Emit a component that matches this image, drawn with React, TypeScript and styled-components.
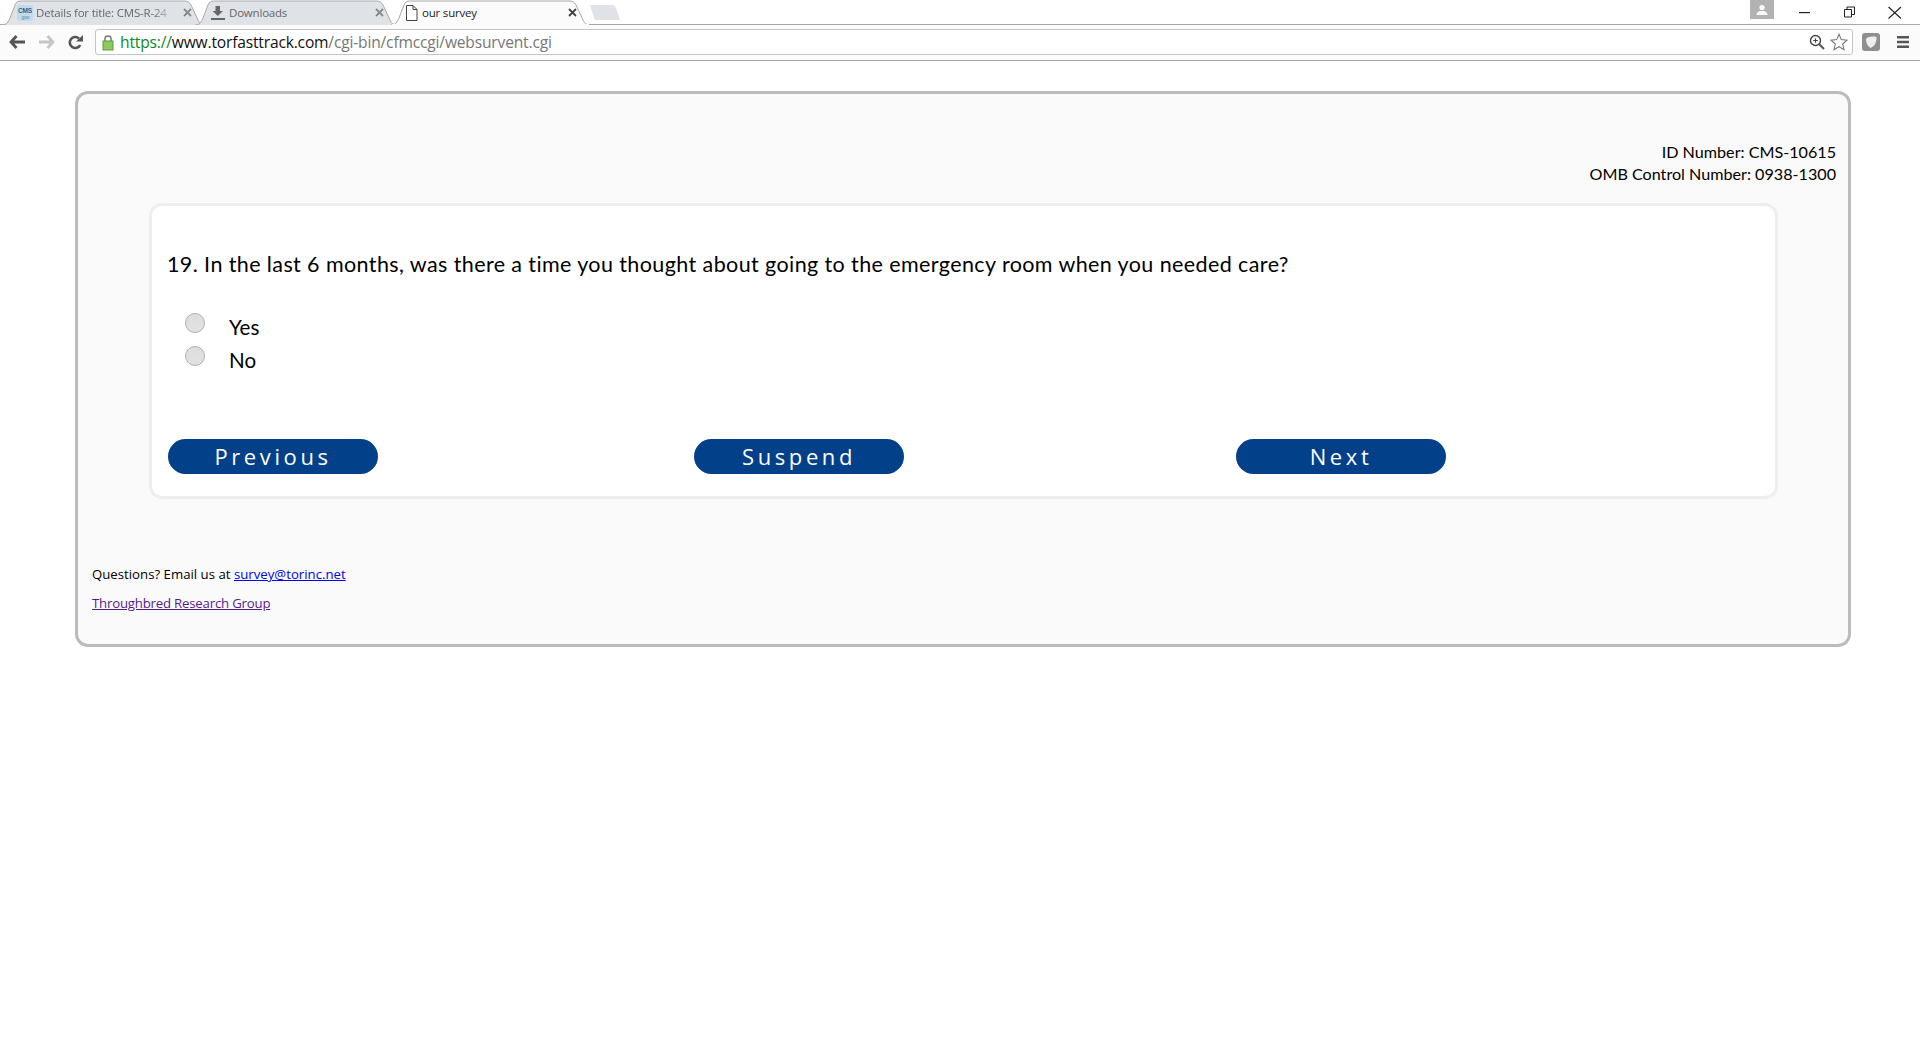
import React from "react";
import styled, { createGlobalStyle } from "styled-components";

const Global = createGlobalStyle`
  html, body { margin: 0; padding: 0; background: #fff; height: 100%; overflow: hidden; }
  body { font-family: "Lato", "Liberation Sans", sans-serif; color: #000; }
  #root { height: 1040px; }
`;

const Browser = styled.header`
  height: 61px;
  background: #fff;
  display: flex;
  flex-direction: column;
`;
const TitleBar = styled.div`
  height: 24px;
  display: flex;
  align-items: flex-start;
  font-family: "Open Sans", sans-serif;
`;
const TabStrip = styled.div`
  display: flex;
  padding-left: 2px;
  flex: 1;
`;
const TabBox = styled.div<{ $w: number; $overlap: number; $active?: boolean }>`
  position: relative;
  width: ${(p) => p.$w}px;
  height: 25px;
  margin-right: -${(p) => p.$overlap}px;
  display: flex;
  align-items: center;
  padding-left: ${(p) => (p.$active ? 11 : 14)}px;
  box-sizing: border-box;
  font-size: 11.5px;
  letter-spacing: -0.2px;
  color: ${(p) => (p.$active ? "#222" : "#666")};
  z-index: ${(p) => (p.$active ? 2 : 1)};
`;
const TabShapeSvg = styled.svg`
  position: absolute;
  left: 0;
  top: 0;
  z-index: -1;
`;
const TabIconSlot = styled.span`
  width: 18px;
  height: 18px;
  display: flex;
  align-items: center;
  justify-content: center;
  flex: none;
  margin-right: 2px;
`;
const TabTitle = styled.span<{ $fade?: boolean }>`
  flex: none;
  width: ${(p) => (p.$fade ? "138px" : "auto")};
  white-space: nowrap;
  overflow: hidden;
  ${(p) =>
    p.$fade
      ? "-webkit-mask-image: linear-gradient(to right, #000 85%, transparent 100%);"
      : ""}
`;
const TabClose = styled.span`
  position: absolute;
  right: 13px;
  top: 8px;
  width: 9px;
  height: 9px;
  display: flex;
`;
const NewTab = styled.svg`
  margin-left: 6px;
  margin-top: 4px;
  flex: none;
`;
const WindowControls = styled.div`
  display: flex;
  align-items: flex-start;
  height: 24px;
  padding-right: 17px;
`;
const Profile = styled.div`
  width: 24px;
  height: 19px;
  background: #b2b2b2;
  display: flex;
  align-items: center;
  justify-content: center;
  margin-right: 25px;
`;
const WinBtn = styled.svg<{ $gap: number }>`
  margin-right: ${(p) => p.$gap}px;
  margin-top: 6px;
  flex: none;
`;
const Toolbar = styled.div`
  height: 37px;
  background: #fbfbfb;
  border-top: 1px solid #a8a8a8;
  border-bottom: 1px solid #a4a4a4;
  display: flex;
  align-items: center;
  box-sizing: border-box;
  padding: 0 0 1px 9px;
`;
const NavIcon = styled.svg<{ $gap: number }>`
  margin-right: ${(p) => p.$gap}px;
  flex: none;
`;
const Omnibox = styled.div`
  width: 1758px;
  height: 26px;
  box-sizing: border-box;
  background: #fff;
  border: 1px solid #c4c4c4;
  border-radius: 3px;
  display: flex;
  align-items: center;
  padding-left: 6px;
  flex: none;
`;
const Url = styled.div`
  flex: 1;
  margin-left: 6px;
  font-family: "Open Sans", sans-serif;
  font-size: 15.6px;
  letter-spacing: -0.18px;
  color: #777;
  white-space: nowrap;
`;
const UrlScheme = styled.span`
  color: #0a8a2a;
`;
const UrlHost = styled.span`
  color: #111;
`;
const OmniIcons = styled.div`
  display: flex;
  align-items: center;
  gap: 5px;
  padding-right: 4px;
`;
const ToolRight = styled.div`
  display: flex;
  align-items: center;
  margin-left: 9px;
  gap: 17px;
`;

const Panel = styled.main`
  margin: 30px 69px 0 75px;
  height: 556px;
  box-sizing: border-box;
  background: #fafafa;
  border: 3px solid #bcbcbc;
  border-radius: 13px;
  display: flex;
  flex-direction: column;
`;
const FormInfo = styled.div`
  text-align: right;
  font-size: 16.15px;
  line-height: 22px;
  padding: 47px 12px 0 0;
  height: 109px;
  box-sizing: border-box;
`;
const Card = styled.section`
  margin: 0 70px 0 71px;
  height: 296px;
  box-sizing: border-box;
  background: #fff;
  border: 3px solid #eeeeee;
  border-radius: 13px;
  padding: 0 0 0 15px;
  display: flex;
  flex-direction: column;
`;
const Question = styled.h1`
  margin: 0;
  padding-top: 45px;
  font-weight: 400;
  font-size: 21.5px;
  letter-spacing: 0.4px;
  line-height: 26px;
`;
const Options = styled.div`
  margin-top: 38px;
  padding-left: 18px;
  display: flex;
  flex-direction: column;
  gap: 9px;
`;
const Option = styled.label`
  display: flex;
  align-items: flex-start;
  height: 24px;
  font-size: 20.6px;
  line-height: 24px;
`;
const Radio = styled.span`
  width: 20px;
  height: 20px;
  box-sizing: border-box;
  border-radius: 50%;
  border: 1px solid #aeaeae;
  background: linear-gradient(#dedede, #e2e2e2);
  flex: none;
  margin-right: 24px;
  margin-top: -2px;
`;
const OptionText = styled.span``;
const Buttons = styled.div`
  display: flex;
  margin-top: 67px;
  margin-left: 1px;
`;
const NavButton = styled.button<{ $gap?: number }>`
  width: 210px;
  height: 35px;
  margin-right: ${(p) => p.$gap ?? 0}px;
  border: 0;
  border-radius: 18px;
  background: #03408a;
  color: #fff;
  font-family: "Open Sans", sans-serif;
  font-size: 22px;
  letter-spacing: 3.6px;
  padding: 0;
  line-height: 35px;
`;
const Footer = styled.footer`
  margin-top: 67px;
  padding-left: 14px;
  font-family: "Open Sans", sans-serif;
  font-size: 13.2px;
  letter-spacing: 0.01px;
`;
const FooterLine = styled.p`
  margin: 0 0 12px;
  line-height: 17px;
`;
const MailLink = styled.a`
  color: #0000ee;
`;
const GroupLink = styled.a`
  color: #551a8b;
  letter-spacing: -0.19px;
`;

function TabShape({ w, active }: { w: number; active?: boolean }) {
  const d = `M0 25 C5 25 6 22 8 18 L13 5 C14 2 16 1 19 1 L${w - 21} 1 C${w - 17} 1 ${w - 16} 2 ${w - 14} 5 L${w - 7} 20 C${w - 5} 24 ${w - 3} 25 ${w} 25`;
  return (
    <TabShapeSvg width={w} height={25} viewBox={`0 0 ${w} 25`}>
      <path d={d} fill={active ? "#fbfbfb" : "#dfe3e8"} stroke="#a8a8a8" strokeWidth="1" />
      {active && <rect x="1" y="24" width={w - 2} height="2" fill="#fbfbfb" />}
    </TabShapeSvg>
  );
}

function X({ color }: { color: string }) {
  return (
    <TabClose>
      <svg width="9" height="9" viewBox="0 0 9 9">
        <path d="M1 1 L8 8 M8 1 L1 8" stroke={color} strokeWidth="1.8" />
      </svg>
    </TabClose>
  );
}

const CmsIcon = () => (
  <svg width="16" height="16" viewBox="0 0 16 16">
    <rect width="16" height="16" rx="2" fill="#bfdcee" />
    <text x="8" y="7.5" textAnchor="middle" fontSize="6.5" fontWeight="700" fill="#3a5f8a" fontFamily="Liberation Sans">CMS</text>
    <text x="8" y="13.5" textAnchor="middle" fontSize="5" fill="#5c86a8" fontFamily="Liberation Sans">.gov</text>
  </svg>
);
const DownloadIcon = () => (
  <svg width="16" height="16" viewBox="0 0 16 16">
    <path d="M5.5 1 H10 V6 H13 L7.8 11 L2.6 6 H5.5 Z" fill="#666" />
    <rect x="1" y="13" width="14" height="2" fill="#666" />
  </svg>
);
const PageIcon = () => (
  <svg width="13" height="16" viewBox="0 0 13 16">
    <path d="M1.5 .5 H8 L12 4.5 V15.5 H1.5 Z M8 .5 V4.5 H12" fill="#fff" stroke="#444" strokeWidth="1" />
  </svg>
);

export default function App() {
  return (
    <>
      <Global />
      <Browser>
        <TitleBar>
          <TabStrip>
            <TabBox $w={203} $overlap={10}>
              <TabShape w={203} />
              <TabIconSlot><CmsIcon /></TabIconSlot>
              <TabTitle $fade>Details for title: CMS-R-24</TabTitle>
              <X color="#888" />
            </TabBox>
            <TabBox $w={202} $overlap={6}>
              <TabShape w={202} />
              <TabIconSlot><DownloadIcon /></TabIconSlot>
              <TabTitle>Downloads</TabTitle>
              <X color="#888" />
            </TabBox>
            <TabBox $w={199} $overlap={7} $active>
              <TabShape w={199} active />
              <TabIconSlot><PageIcon /></TabIconSlot>
              <TabTitle>our survey</TabTitle>
              <X color="#444" />
            </TabBox>
            <NewTab width="32" height="17" viewBox="0 0 32 17">
              <path d="M1 1 H23 C25 1 26 2 27 4 L31 16 H7 C6 16 5 15 5 14 Z" fill="#dfe3e8" />
            </NewTab>
          </TabStrip>
          <WindowControls>
            <Profile>
              <svg width="12" height="12" viewBox="0 0 12 12">
                <circle cx="6" cy="3.5" r="2.6" fill="#fff" />
                <path d="M0.5 11 C1 7.5 3 7 6 7 C9 7 11 7.5 11.5 11 Z" fill="#fff" />
              </svg>
            </Profile>
            <WinBtn $gap={34} width="11" height="12" viewBox="0 0 11 12">
              <rect x="0" y="6" width="11" height="1.2" fill="#222" />
            </WinBtn>
            <WinBtn $gap={32} width="11" height="12" viewBox="0 0 11 12">
              <path d="M.5 3.5 H7.5 V11 H.5 Z M3 3.5 V1 H10.5 V8.5 H7.5" fill="none" stroke="#222" strokeWidth="1" />
            </WinBtn>
            <WinBtn $gap={0} width="16" height="13" viewBox="0 0 16 13">
              <path d="M1.5 1 L14 12.5 M14 1 L1.5 12.5" stroke="#222" strokeWidth="1.1" />
            </WinBtn>
          </WindowControls>
        </TitleBar>
        <Toolbar>
          <NavIcon $gap={13} width="17" height="14" viewBox="0 0 17 14">
            <path d="M7.5 1 L2 7 L7.5 13 M2.5 7 H16" fill="none" stroke="#555" strokeWidth="2.8" />
          </NavIcon>
          <NavIcon $gap={13} width="16" height="14" viewBox="0 0 16 14">
            <path d="M8.5 1 L14 7 L8.5 13 M13.5 7 H0" fill="none" stroke="#c6c6c6" strokeWidth="2.8" />
          </NavIcon>
          <NavIcon $gap={12} width="15" height="15" viewBox="0 0 15 15">
            <path d="M12.2 10 A5.5 5.5 0 1 1 11 3.5" fill="none" stroke="#555" strokeWidth="2.6" />
            <path d="M8 6.5 H15 V0 Z" fill="#555" />
          </NavIcon>
          <Omnibox>
            <svg width="12" height="17" viewBox="0 0 12 17">
              <path d="M3 8 V4.5 C3 1 9 1 9 4.5 V8" fill="none" stroke="#777" strokeWidth="1.5" />
              <rect x="1" y="7" width="10" height="9" fill="#90c860" stroke="#5f9a3a" strokeWidth="1" />
            </svg>
            <Url>
              <UrlScheme>https://</UrlScheme>
              <UrlHost>www.torfasttrack.com</UrlHost>/cgi-bin/cfmccgi/websurvent.cgi
            </Url>
            <OmniIcons>
              <svg width="16" height="16" viewBox="0 0 16 16">
                <circle cx="6.5" cy="6.5" r="5" fill="none" stroke="#444" strokeWidth="1.4" />
                <path d="M4.2 6.5 H8.8 M6.5 4.2 V8.8" stroke="#444" strokeWidth="1.1" />
                <path d="M10.3 10.3 L15 15" stroke="#555" strokeWidth="2" />
              </svg>
              <svg width="18" height="18" viewBox="0 0 18 18">
                <path d="M9 1.2 L11.3 6.6 L17 7.1 L12.7 11 L14 16.7 L9 13.7 L4 16.7 L5.3 11 L1 7.1 L6.7 6.6 Z" fill="#fff" stroke="#777" strokeWidth="1.1" />
              </svg>
            </OmniIcons>
          </Omnibox>
          <ToolRight>
            <svg width="18" height="18" viewBox="0 0 18 18">
              <rect width="18" height="18" rx="3" fill="#8f8f8f" />
              <path d="M4 6 C6 3.5 11 3 14.5 4 C15 9 12.5 13.5 8.5 15 C5.5 13 3.8 10 4 6 Z" fill="#eee" />
            </svg>
            <svg width="12" height="12" viewBox="0 0 12 12">
              <path d="M0 0 H12 V2.4 H0 Z M0 4.8 H12 V7.2 H0 Z M0 9.6 H12 V12 H0 Z" fill="#555" />
            </svg>
          </ToolRight>
        </Toolbar>
      </Browser>
      <Panel>
        <FormInfo>
          ID Number: CMS-10615
          <br />
          OMB Control Number: 0938-1300
        </FormInfo>
        <Card>
          <Question>19. In the last 6 months, was there a time you thought about going to the emergency room when you needed care?</Question>
          <Options>
            <Option><Radio /><OptionText>Yes</OptionText></Option>
            <Option><Radio /><OptionText>No</OptionText></Option>
          </Options>
          <Buttons>
            <NavButton $gap={316}>Previous</NavButton>
            <NavButton $gap={332}>Suspend</NavButton>
            <NavButton>Next</NavButton>
          </Buttons>
        </Card>
        <Footer>
          <FooterLine>
            Questions? Email us at <MailLink href="#">survey@torinc.net</MailLink>
          </FooterLine>
          <FooterLine>
            <GroupLink href="#">Throughbred Research Group</GroupLink>
          </FooterLine>
        </Footer>
      </Panel>
    </>
  );
}
